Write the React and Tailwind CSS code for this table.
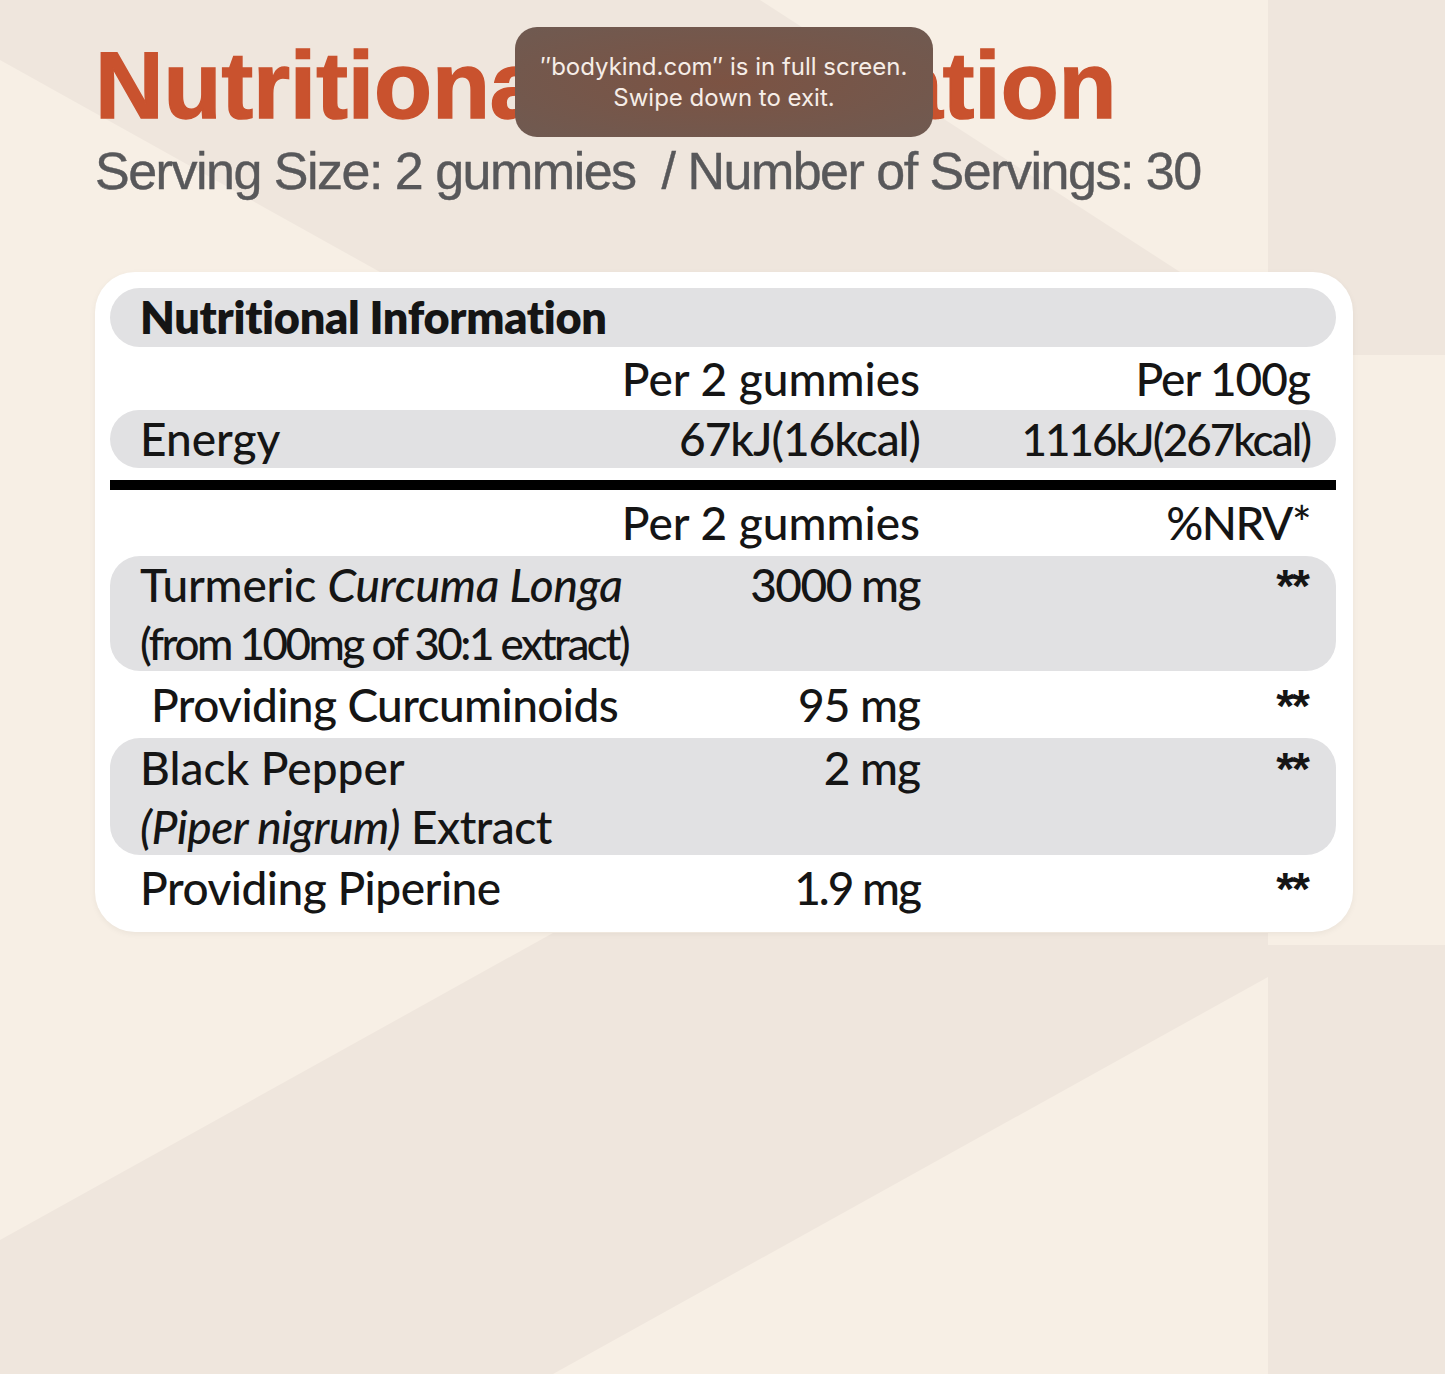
import clsx from "clsx";

const sans = "font-['Liberation_Sans',Arial,sans-serif]";
const table = "font-['Lato','Liberation_Sans',sans-serif]";

const Row = ({ shaded, className, label, mid, right }) => (
  <div
    className={clsx(
      "grid grid-cols-[1fr_auto_390px] pl-[30px] pr-[26px]",
      shaded && "bg-[#e1e1e3] rounded-[30px]",
      className,
    )}
  >
    <div>{label}</div>
    <div className="text-right">{mid}</div>
    <div className="text-right">{right}</div>
  </div>
);

const Stars = () => (
  <span className="font-['Liberation_Sans',sans-serif] font-bold tracking-[-2px] pr-[2px]">
    **
  </span>
);

export default function App() {
  return (
    <div className="relative w-full h-[1374px] overflow-hidden bg-[#f7efe5]">
      {/* soft background shapes */}
      <svg
        className="absolute inset-0 w-full h-full"
        viewBox="0 0 1445 1374"
        preserveAspectRatio="none"
      >
        <polygon points="0,0 760,0 1180,272 380,272 0,60" fill="#efe6dd" />
        <polygon points="1268,0 1445,0 1445,355 1268,355" fill="#efe6dd" />
        <polygon
          points="553,933 1268,933 1268,977 553,1374 0,1374 0,1240"
          fill="#efe6dd"
        />
        <polygon points="1268,945 1445,945 1445,1374 1268,1374" fill="#efe6dd" />
      </svg>

      <div className="relative pl-[95px] pt-[38px]">
        <h1
          className={clsx(
            sans,
            "text-[95px] leading-none font-bold tracking-[-0.1px] text-[#c9522e] [-webkit-text-stroke:1.5px_#c9522e]",
          )}
        >
          Nutritional Information
        </h1>
        <p
          className={clsx(
            sans,
            "mt-[12px] text-[52px] leading-none tracking-[-1.5px] text-[#58585a] whitespace-pre [-webkit-text-stroke:0.4px_#58585a]",
          )}
        >
          {"Serving Size: 2 gummies  / Number of Servings: 30"}
        </p>

        <div
          className={clsx(
            table,
            "mt-[75px] w-[1258px] bg-white rounded-[40px] pt-[16px] pl-[15px] pr-[17px] pb-[12px] text-[46px] font-medium text-[#151515] shadow-[0_2px_6px_rgba(0,0,0,0.05)]",
          )}
        >
          <Row
            shaded
            className="h-[59px] leading-[59px] font-extrabold text-[45px] tracking-[-0.3px]"
            label="Nutritional Information"
          />
          <Row
            className="h-[63px] leading-[63px]"
            mid="Per 2 gummies"
            right={<span className="tracking-[-1px]">Per 100g</span>}
          />
          <Row
            shaded
            className="h-[58px] leading-[58px]"
            label="Energy"
            mid={<span className="tracking-[-1px]">67kJ(16kcal)</span>}
            right={
              <span className="text-[44px] tracking-[-2px]">1116kJ(267kcal)</span>
            }
          />
          <div className="mt-[12px] h-[10px] bg-black" />
          <Row
            className="h-[66px] leading-[66px]"
            mid="Per 2 gummies"
            right={<span className="tracking-[-1.5px]">%NRV*</span>}
          />
          <Row
            shaded
            className="h-[115px] leading-[58px]"
            label={
              <>
                <div className="tracking-[-0.2px]">
                  Turmeric <i>Curcuma Longa</i>
                </div>
                <div className="text-[44px] tracking-[-2.5px]">
                  (from 100mg of 30:1 extract)
                </div>
              </>
            }
            mid={<span className="tracking-[-1.5px]">3000 mg</span>}
            right={<Stars />}
          />
          <Row
            className="h-[67px] leading-[67px]"
            label={
              <span className="pl-[11px] tracking-[-0.6px]">
                Providing Curcuminoids
              </span>
            }
            mid={<span className="tracking-[-1px]">95 mg</span>}
            right={<Stars />}
          />
          <Row
            shaded
            className="h-[117px] leading-[59px]"
            label={
              <>
                <div>Black Pepper</div>
                <div className="tracking-[-0.5px]">
                  <i>(Piper nigrum)</i> Extract
                </div>
              </>
            }
            mid={<span className="tracking-[-1px]">2 mg</span>}
            right={<Stars />}
          />
          <Row
            className="h-[65px] leading-[65px]"
            label={<span className="tracking-[-0.5px]">Providing Piperine</span>}
            mid={<span className="tracking-[-2px]">1.9 mg</span>}
            right={<Stars />}
          />
        </div>
      </div>

      {/* full screen notice */}
      <div className="absolute left-[515px] top-[27px] w-[418px] h-[110px] rounded-[22px] bg-[radial-gradient(ellipse_at_center,#7c5343_0%,#6f5a51_100%)] flex flex-col items-center justify-center font-['Inter','Liberation_Sans',sans-serif] text-[24px] leading-[31px] text-[#f6ede7]">
        <div>″bodykind.com″ is in full screen.</div>
        <div>Swipe down to exit.</div>
      </div>
    </div>
  );
}
